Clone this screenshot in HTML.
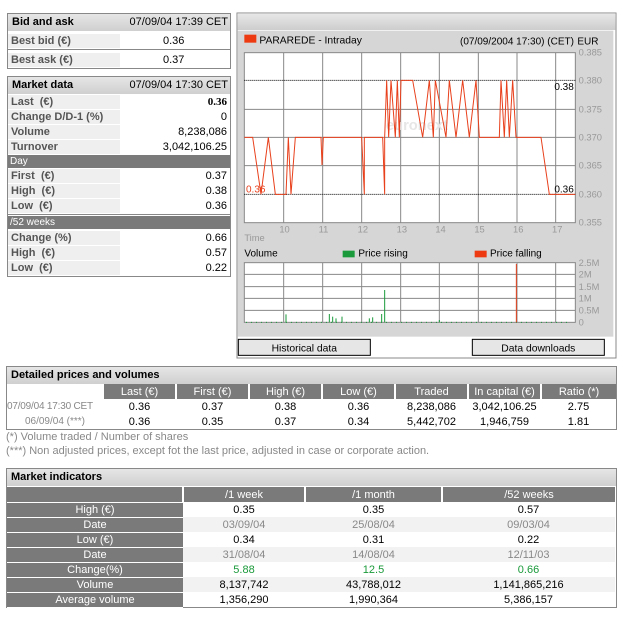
<!DOCTYPE html>
<html><head><meta charset="utf-8"><style>
*{margin:0;padding:0;box-sizing:border-box}
body{width:623px;height:620px;background:#fff;font-family:"Liberation Sans",Arial,sans-serif;font-size:11px;color:#000;position:relative;overflow:hidden}
.a{position:absolute}
.hd{background:linear-gradient(#e6e6e6,#cfcfcf);font-weight:bold;font-size:11px;height:17px;line-height:17px;padding-left:4px}
.hd span{position:absolute;right:2px;font-weight:normal}
.box{border:1px solid #888}
.row{position:absolute;left:0;right:0;height:15px;line-height:15px}
.lab{position:absolute;left:0;width:112px;height:14px;background:#efefef;padding-left:3px;color:#555;font-weight:bold}
.val{position:absolute;right:3px}
.bar{position:absolute;left:0;right:0;height:13px;background:#7a7a7a;color:#fff;line-height:13px;padding-left:2px;font-size:10px}
table{border-collapse:collapse;position:absolute;font-size:11px;table-layout:fixed}
td{height:15px;text-align:center;padding:0;white-space:nowrap;overflow:hidden}
.th td{background:#7a7a7a;color:#fff;border-right:2px solid #fff}
.gl{background:#7a7a7a;color:#fff;border-bottom:1px solid #fff}
.g{color:#888}
.gr{color:#1a9a3a}
</style></head><body>

<div class="a box" style="left:7px;top:13px;width:224px;height:56px">
 <div class="hd" style="position:relative">Bid and ask<span>07/09/04 17:39 CET</span></div>
 <div class="row" style="top:18px;height:18px;line-height:18px;border-bottom:1px solid #888"><div class="lab" style="top:2px;line-height:14px">Best bid (€)</div><div class="val" style="left:155px">0.36</div></div>
 <div class="row" style="top:37px;height:18px;line-height:18px"><div class="lab" style="top:2px;line-height:14px">Best ask (€)</div><div class="val" style="left:155px">0.37</div></div>
</div>

<div class="a box" style="left:7px;top:76px;width:224px;height:201px">
 <div class="hd" style="position:relative">Market data<span>07/09/04 17:30 CET</span></div>
 <div class="row" style="top:18px"><div class="lab">Last &nbsp;(€)</div><div class="val" style="font-weight:bold;font-family:'Liberation Serif',serif">0.36</div></div>
 <div class="row" style="top:33px"><div class="lab">Change D/D-1 (%)</div><div class="val">0</div></div>
 <div class="row" style="top:48px"><div class="lab">Volume</div><div class="val">8,238,086</div></div>
 <div class="row" style="top:63px"><div class="lab">Turnover</div><div class="val">3,042,106.25</div></div>
 <div class="bar" style="top:78px">Day</div>
 <div class="row" style="top:92px"><div class="lab">First &nbsp;(€)</div><div class="val">0.37</div></div>
 <div class="row" style="top:107px"><div class="lab">High &nbsp;(€)</div><div class="val">0.38</div></div>
 <div class="row" style="top:122px"><div class="lab">Low &nbsp;(€)</div><div class="val">0.36</div></div>
 <div class="a" style="left:0;right:0;top:137px;border-top:1px solid #888"></div>
 <div class="bar" style="top:139px">/52 weeks</div>
 <div class="row" style="top:154px"><div class="lab">Change (%)</div><div class="val">0.66</div></div>
 <div class="row" style="top:169px"><div class="lab">High &nbsp;(€)</div><div class="val">0.57</div></div>
 <div class="row" style="top:184px"><div class="lab">Low &nbsp;(€)</div><div class="val">0.22</div></div>
</div>

<svg class="a" style="left:236px;top:10px" width="387" height="350" viewBox="0 0 1161 1050" font-family="Liberation Sans, Arial, sans-serif">
 <defs><linearGradient id="hg" x1="0" y1="0" x2="0" y2="1"><stop offset="0" stop-color="#e8e8e8"/><stop offset="1" stop-color="#cdcdcd"/></linearGradient></defs>
 <rect x="3" y="9" width="1137" height="1035" fill="#fff" stroke="#888" stroke-width="3"/>
 <rect x="4" y="10" width="1135" height="50" fill="url(#hg)"/>
 <rect x="4" y="62" width="1128" height="918" fill="#d6d6d6"/>
 <rect x="25" y="74" width="36" height="24" fill="#ee3a10"/>
 <text x="70" y="100" font-size="31">PARAREDE - Intraday</text>
 <text x="672" y="104" font-size="30">(07/09/2004 17:30) (CET)</text>
 <text x="1024" y="104" font-size="30">EUR</text>
 <rect x="25" y="128" width="993" height="510" fill="#fff" stroke="#888" stroke-width="3"/>
 <g stroke="#888" stroke-width="3">
  <line x1="143" y1="128" x2="143" y2="638"/><line x1="260" y1="128" x2="260" y2="638"/><line x1="377" y1="128" x2="377" y2="638"/><line x1="494" y1="128" x2="494" y2="638"/><line x1="610" y1="128" x2="610" y2="638"/><line x1="727" y1="128" x2="727" y2="638"/><line x1="843" y1="128" x2="843" y2="638"/><line x1="959" y1="128" x2="959" y2="638"/>
  <line x1="25" y1="298" x2="1018" y2="298"/><line x1="25" y1="382" x2="1018" y2="382"/><line x1="25" y1="467" x2="1018" y2="467"/>
 </g>
 <g stroke="#000" stroke-width="3" stroke-dasharray="3,3"><line x1="25" y1="211" x2="1018" y2="211"/><line x1="25" y1="553" x2="1018" y2="553"/></g>
 <text x="450" y="360" font-size="44" fill="#e6e6e6" font-weight="bold">euronext</text>
 <polyline fill="none" stroke="#e8401c" stroke-width="3" points="25,382 50,382 75,553 97,382 118,553 150,553 157,382 165,553 178,382 255,382 258,465 262,382 377,382 385,553 385,382 440,382 446,553 446,382 452,211 458,382 465,211 478,382 484,211 490,382 495,211 530,211 560,382 580,211 592,382 598,211 630,382 640,211 660,382 680,211 700,382 720,211 730,382 735,382 790,382 795,211 805,382 812,211 820,382 830,211 840,382 915,382 940,553 1018,553"/>
 <text x="30" y="548" font-size="30" fill="#e8401c">0.36</text>
 <text x="955" y="240" font-size="30">0.38</text>
 <text x="955" y="548" font-size="30">0.36</text>
 <g font-size="28" fill="#999">
  <text x="1028" y="137">0.385</text><text x="1028" y="220">0.380</text><text x="1028" y="307">0.375</text><text x="1028" y="391">0.370</text><text x="1028" y="476">0.365</text><text x="1028" y="562">0.360</text><text x="1028" y="647">0.355</text>
  <text x="130" y="667">10</text><text x="248" y="667">11</text><text x="365" y="667">12</text><text x="482" y="667">13</text><text x="598" y="667">14</text><text x="715" y="667">15</text><text x="831" y="667">16</text><text x="948" y="667">17</text>
  <text x="25" y="693">Time</text>
 </g>
 <text x="25" y="740" font-size="30">Volume</text>
 <rect x="320" y="722" width="36" height="20" fill="#1a9a3a"/><text x="367" y="740" font-size="30">Price rising</text>
 <rect x="716" y="722" width="36" height="20" fill="#ee3a10"/><text x="762" y="740" font-size="30">Price falling</text>
 <rect x="25" y="758" width="993" height="179" fill="#fff" stroke="#888" stroke-width="3"/>
 <g stroke="#888" stroke-width="3">
  <line x1="143" y1="758" x2="143" y2="937"/><line x1="260" y1="758" x2="260" y2="937"/><line x1="377" y1="758" x2="377" y2="937"/><line x1="494" y1="758" x2="494" y2="937"/><line x1="610" y1="758" x2="610" y2="937"/><line x1="727" y1="758" x2="727" y2="937"/><line x1="843" y1="758" x2="843" y2="937"/><line x1="959" y1="758" x2="959" y2="937"/>
  <line x1="25" y1="793" x2="1018" y2="793"/><line x1="25" y1="830" x2="1018" y2="830"/><line x1="25" y1="865" x2="1018" y2="865"/><line x1="25" y1="901" x2="1018" y2="901"/>
 </g>
 <g stroke="#1a9a3a" stroke-width="3">
  <line x1="150" y1="937" x2="150" y2="913"/><line x1="280" y1="937" x2="280" y2="912"/><line x1="290" y1="937" x2="290" y2="920"/><line x1="300" y1="937" x2="300" y2="925"/><line x1="318" y1="937" x2="318" y2="920"/><line x1="400" y1="937" x2="400" y2="925"/><line x1="410" y1="937" x2="410" y2="922"/><line x1="437" y1="937" x2="437" y2="912"/><line x1="446" y1="937" x2="446" y2="840"/><line x1="610" y1="937" x2="610" y2="930"/>
  <line x1="30" y1="937" x2="1000" y2="937" stroke-dasharray="3,12"/>
 </g>
 <line x1="841" y1="937" x2="841" y2="762" stroke="#e8401c" stroke-width="3"/>
 <g font-size="28" fill="#999"><text x="1028" y="768">2.5M</text><text x="1028" y="803">2M</text><text x="1028" y="840">1.5M</text><text x="1028" y="875">1M</text><text x="1028" y="911">0.5M</text><text x="1028" y="947">0</text></g>
 <rect x="7" y="988" width="396" height="48" fill="#e6e6e6" stroke="#000" stroke-width="3"/>
 <text x="205" y="1024" font-size="31" text-anchor="middle">Historical data</text>
 <rect x="709" y="988" width="396" height="48" fill="#e6e6e6" stroke="#000" stroke-width="3"/>
 <text x="907" y="1024" font-size="31" text-anchor="middle">Data downloads</text>
</svg>

<div class="a box" style="left:6px;top:366px;width:611px;height:64px">
 <div class="hd" style="position:relative">Detailed prices and volumes</div>
</div>
<table style="left:7px;top:384px;width:609px">
 <tr class="th"><td style="background:#fff;width:96px"></td><td style="width:73px">Last (€)</td><td style="width:73px">First (€)</td><td style="width:73px">High (€)</td><td style="width:73px">Low (€)</td><td style="width:73px">Traded</td><td style="width:73px">In capital (€)</td><td style="border-right:0">Ratio (*)</td></tr>
 <tr><td class="g" style="text-align:left;font-size:10px;letter-spacing:-0.2px">07/09/04 17:30 CET</td><td>0.36</td><td>0.37</td><td>0.38</td><td>0.36</td><td>8,238,086</td><td>3,042,106.25</td><td>2.75</td></tr>
 <tr><td class="g" style="font-size:10px">06/09/04 (***)</td><td>0.36</td><td>0.35</td><td>0.37</td><td>0.34</td><td>5,442,702</td><td>1,946,759</td><td>1.81</td></tr>
</table>
<div class="a g" style="left:6px;top:431px">(*) Volume traded / Number of shares</div>
<div class="a g" style="left:6px;top:445px">(***) Non adjusted prices, except fot the last price, adjusted in case or corporate action.</div>

<div class="a box" style="left:6px;top:468px;width:611px;height:140px">
 <div class="hd" style="position:relative">Market indicators</div>
</div>
<table style="left:7px;top:487px;width:608px">
 <tr class="th"><td style="width:176px;border-bottom:1px solid #fff"></td><td style="width:122px">/1 week</td><td style="width:137px">/1 month</td><td style="border-right:0">/52 weeks</td></tr>
 <tr><td class="gl">High (€)</td><td>0.35</td><td>0.35</td><td>0.57</td></tr>
 <tr style="background:#f2f2f2"><td class="gl">Date</td><td class="g">03/09/04</td><td class="g">25/08/04</td><td class="g">09/03/04</td></tr>
 <tr><td class="gl">Low (€)</td><td>0.34</td><td>0.31</td><td>0.22</td></tr>
 <tr style="background:#f2f2f2"><td class="gl">Date</td><td class="g">31/08/04</td><td class="g">14/08/04</td><td class="g">12/11/03</td></tr>
 <tr><td class="gl">Change(%)</td><td class="gr">5.88</td><td class="gr">12.5</td><td class="gr">0.66</td></tr>
 <tr style="background:#f2f2f2"><td class="gl">Volume</td><td>8,137,742</td><td>43,788,012</td><td>1,141,865,216</td></tr>
 <tr><td class="gl">Average volume</td><td>1,356,290</td><td>1,990,364</td><td>5,386,157</td></tr>
</table>
</body></html>
